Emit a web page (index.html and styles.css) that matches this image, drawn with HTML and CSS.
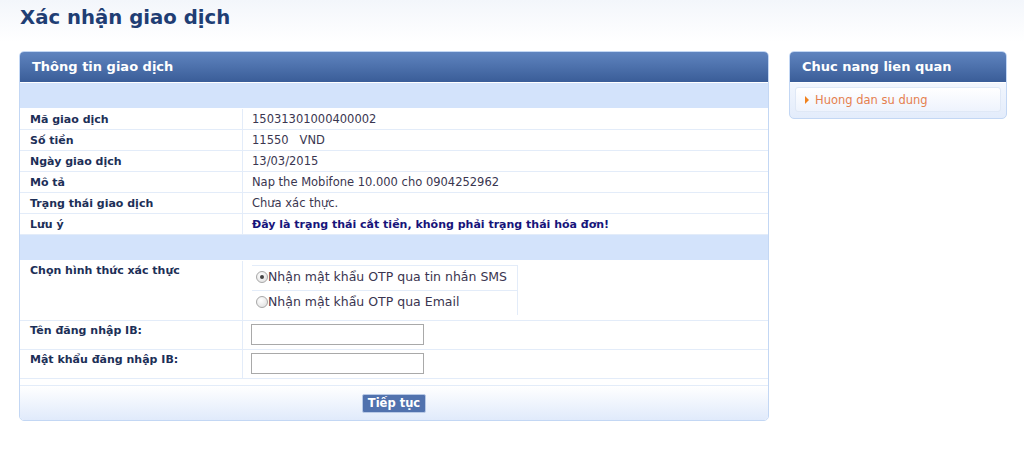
FILE: index.html
```html
<!DOCTYPE html>
<html lang="vi">
<head>
<meta charset="utf-8">
<title>Xác nhận giao dịch</title>
<link rel="stylesheet" href="styles.css">
</head>
<body>
<div class="page-head">
  <h1 class="page-title">Xác nhận giao dịch</h1>
</div>
<div class="layout">
  <div class="panel main-panel">
    <div class="panel-head">Thông tin giao dịch</div>
    <table class="info">
      <tr class="band"><td colspan="2"></td></tr>
      <tr><td class="lbl">Mã giao dịch</td><td class="val">15031301000400002</td></tr>
      <tr><td class="lbl">Số tiền</td><td class="val">11550&nbsp;&nbsp;&nbsp;VND</td></tr>
      <tr><td class="lbl">Ngày giao dịch</td><td class="val">13/03/2015</td></tr>
      <tr><td class="lbl">Mô tả</td><td class="val">Nap the Mobifone 10.000 cho 0904252962</td></tr>
      <tr><td class="lbl">Trạng thái giao dịch</td><td class="val">Chưa xác thực.</td></tr>
      <tr><td class="lbl">Lưu ý</td><td class="val note">Đây là trạng thái cắt tiền, không phải trạng thái hóa đơn!</td></tr>
      <tr class="band"><td colspan="2"></td></tr>
      <tr class="radio-row">
        <td class="lbl top">Chọn hình thức xác thực</td>
        <td class="val top">
          <div class="options">
            <label class="opt"><span class="radio checked"></span>Nhận mật khẩu OTP qua tin nhắn SMS</label>
            <label class="opt"><span class="radio"></span>Nhận mật khẩu OTP qua Email</label>
          </div>
        </td>
      </tr>
      <tr class="input-row"><td class="lbl top">Tên đăng nhập IB:</td><td class="val top"><input class="field" type="text"></td></tr>
      <tr class="input-row"><td class="lbl top">Mật khẩu đăng nhập IB:</td><td class="val top"><input class="field" type="password"></td></tr>
    </table>
    <div class="panel-foot">
      <button class="btn" type="button">Tiếp tục</button>
    </div>
  </div>
  <div class="panel side-panel">
    <div class="panel-head">Chuc nang lien quan</div>
    <div class="side-body">
      <div class="side-item"><span class="arrow"></span><a class="side-link" href="#">Huong dan su dung</a></div>
    </div>
  </div>
</div>
</body>
</html>
```
FILE: styles.css
```css
html, body {
  margin: 0;
  padding: 0;
}
body {
  font-family: "DejaVu Sans", Verdana, sans-serif;
  font-size: 11.5px;
  color: #333;
  background: linear-gradient(#f3f6fb 0px, #ffffff 42px) no-repeat;
  background-color: #fff;
}
.page-head {
  height: 51px;
  padding: 0 20px;
}
.page-title {
  margin: 0;
  padding-top: 5px;
  font-size: 19.7px;
  font-weight: bold;
  color: #1f3e74;
  line-height: 26px;
}
.layout {
  display: flex;
  align-items: flex-start;
  padding-left: 19px;
  gap: 20px;
}
.panel {
  border: 1px solid #c3d7f4;
  border-radius: 5px;
  background: #fff;
  overflow: hidden;
}
.main-panel {
  width: 748px;
}
.side-panel {
  width: 216px;
  background: linear-gradient(#ffffff, #e3ecfb);
}
.panel-head {
  height: 30px;
  line-height: 30px;
  padding-left: 12px;
  background: linear-gradient(#5f84bf, #3a5d98);
  color: #fff;
  font-weight: bold;
  font-size: 13px;
  border-bottom: 1px solid #fff;
}
.info {
  width: 100%;
  border-collapse: collapse;
}
.info td {
  padding: 1px 0 0 0;
  height: 19px;
  line-height: 19px;
  border-bottom: 1px solid #e3ecf9;
  vertical-align: middle;
}
.info .band td {
  height: 25px;
  padding: 0;
  background: #d3e3fb;
  border-bottom: 1px solid #fff;
}
.info td.lbl {
  width: 212px;
  padding-left: 10px;
  font-weight: bold;
  font-size: 11px;
  color: #1d2f57;
  border-right: 1px solid #e3ecf9;
}
.info td.top {
  vertical-align: top;
}
.info td.val {
  padding-left: 9px;
  color: #3a3650;
}
.info td.note {
  font-weight: bold;
  font-size: 11px;
  color: #17147a;
}
.info .radio-row > td {
  height: 59px;
  padding-top: 0;
  line-height: 20px;
}
.options {
  width: 265px;
  margin-top: 4px;
  border-right: 1px solid #e3ecf9;
}
.opt {
  display: flex;
  align-items: center;
  box-sizing: border-box;
  height: 25px;
  padding: 0 0 3px 4px;
  border-top: 1px solid #e3ecf9;
  font-size: 12.5px;
  color: #3a3550;
}
.radio {
  display: inline-block;
  box-sizing: border-box;
  width: 12px;
  height: 12px;
  border-radius: 50%;
  border: 1px solid #a8a8a8;
  background: radial-gradient(circle at 40% 35%, #ffffff, #dcdcdc);
  position: relative;
}
.radio.checked::after {
  content: "";
  position: absolute;
  left: 3px;
  top: 3px;
  width: 4px;
  height: 4px;
  border-radius: 50%;
  background: #444;
}
.info .input-row > td {
  height: 28px;
  padding-top: 0;
  line-height: 20px;
}
.field {
  display: block;
  box-sizing: border-box;
  width: 173px;
  height: 21px;
  border: 1px solid #a9a9a9;
  margin: 3px 0 0 -1px;
  padding: 1px 3px;
  font: inherit;
}
.panel-foot {
  margin-top: 6px;
  border-top: 1px solid #e3ecf9;
  height: 34px;
  background: linear-gradient(#ffffff, #e0eafb);
  display: flex;
  justify-content: center;
  align-items: center;
}
.btn {
  height: 19px;
  padding: 0 5px;
  border: 1px solid #b8c9e6;
  border-radius: 2px;
  background: #5172ae;
  color: #fff;
  font-family: "DejaVu Sans", Verdana, sans-serif;
  font-weight: bold;
  font-size: 11.5px;
  line-height: 17px;
}
.side-body {
  padding: 4px 5px 6px 5px;
}
.side-item {
  height: 23px;
  border: 1px solid #dfe8f6;
  border-radius: 3px;
  background: linear-gradient(#ffffff, #eef3fd);
  display: flex;
  align-items: center;
  padding-left: 9px;
}
.arrow {
  width: 0;
  height: 0;
  border-top: 4px solid transparent;
  border-bottom: 4px solid transparent;
  border-left: 4px solid #f0821e;
  margin-right: 6px;
}
.side-link {
  color: #e5804e;
  text-decoration: none;
  font-size: 11.5px;
}
```
